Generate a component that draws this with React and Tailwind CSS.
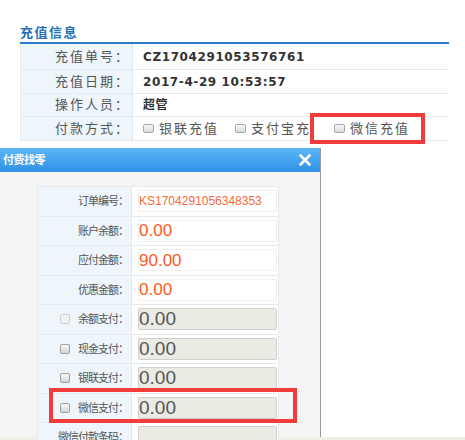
import React from 'react';

function Box({ light }) {
  return (
    <span
      className={`inline-block w-[11px] h-[9px] rounded-[2px] border ${light ? 'border-[#c8c8c8] bg-[#f0f0f0]' : 'border-[#a8a8a8] bg-gradient-to-b from-[#fafafa] to-[#d8d8d8]'}`}
    />
  );
}

function Check({ light }) {
  return (
    <span
      className={`inline-block w-[10px] h-[10px] rounded-[2px] border ${light ? 'border-[#cfcfcf] bg-[#f2f2f2]' : 'border-[#a0a0a0] bg-gradient-to-b from-[#fafafa] to-[#d5d5d5]'}`}
    />
  );
}

const topRows = [
  { label: '充值单号：', value: 'CZ1704291053576761', h: 'h-[26px]' },
  { label: '充值日期：', value: '2017-4-29 10:53:57', h: 'h-[24px]' },
  { label: '操作人员：', value: '超管', h: 'h-[23px]' },
];

const payRows = [
  { label: '余额支付：', light: true },
  { label: '现金支付：' },
  { label: '银联支付：' },
  { label: '微信支付：' },
];

function TopRow({ label, h, children }) {
  return (
    <div className={`flex ${h} border-b border-[#e6e9ee]`}>
      <div className="w-[112px] shrink-0 bg-[#eef5fb] border-r border-[#dfe6ee] flex items-center justify-end pr-[2px] text-[13px] tracking-[2px] text-[#555]">
        {label}
      </div>
      <div className="flex-1 flex items-center pl-[10px]">{children}</div>
    </div>
  );
}

function ModalRow({ label, children, check, light }) {
  return (
    <div className="flex h-[29.5px] border-b border-[#e6e9ee]">
      <div className="w-[94px] shrink-0 bg-[#eef5fb] border-r border-[#e3e8ee] flex items-center justify-end pr-[3px] text-[11px] tracking-[-1px] text-[#555] gap-[8px]">
        {check && <Check light={light} />}
        <span>{label}</span>
      </div>
      <div className="flex-1 flex items-center pl-[6px] pr-[1px] bg-white">{children}</div>
    </div>
  );
}

export default function App() {
  return (
    <div className="relative w-[465px] h-[440px] overflow-hidden bg-white flex flex-col font-['Liberation_Sans','Noto_Sans_CJK_SC',sans-serif]">
      <section className="pt-[24px] pl-[20px] w-[449px]">
        <div className="h-[20px] flex items-center border-b-2 border-[#2a7cc4] text-[13px] font-bold tracking-[1.5px] text-[#2470b8]">
          充值信息
        </div>
        <div className="border-l border-[#e6e9ee]">
          {topRows.map((r) => (
            <TopRow key={r.label} label={r.label} h={r.h}>
              <span className="font-['DejaVu_Sans','Noto_Sans_CJK_SC',sans-serif] font-bold text-[12px] tracking-[0.6px] text-[#333]">
                {r.value}
              </span>
            </TopRow>
          ))}
          <TopRow label="付款方式：" h="h-[24px]">
            <div className="flex items-center text-[13px] tracking-[2px] text-[#555]">
              <Box />
              <span className="ml-[5px]">银联充值</span>
              <span className="ml-[16px]"><Box /></span>
              <span className="ml-[5px]">支付宝充值</span>
            </div>
          </TopRow>
        </div>
      </section>

      <div className="flex-1" />
      <div className="h-[3px] bg-[#efeee4]" />

      {/* highlight on 微信充值 */}
      <div className="absolute left-[310px] top-[113px] w-[115px] h-[31px] border-4 border-[#f23b3b] bg-white flex items-center pl-[20px] text-[13px] tracking-[2px] text-[#555]">
        <Box />
        <span className="ml-[5px]">微信充值</span>
      </div>

      {/* dialog */}
      <div className="absolute left-0 top-[148px] w-[321px] h-[289px] bg-[#f5f5f5] border-r border-[#999] flex flex-col">
        <div className="h-[24px] shrink-0 bg-gradient-to-b from-[#5cb6f6] to-[#2e91e6] flex items-center justify-between pl-[3px] pr-[9px]">
          <span className="text-white font-bold text-[11px] tracking-[-0.5px]">付费找零</span>
          <svg width="12" height="12" viewBox="0 0 12 12">
            <path d="M1.5 1.5 L10.5 10.5 M10.5 1.5 L1.5 10.5" stroke="#fff" strokeWidth="2.6" strokeLinecap="round" />
          </svg>
        </div>
        <div className="pt-[14px] pl-[37px]">
          <div className="w-[242px] border-l border-r border-t border-[#e6e9ee]">
            <ModalRow label="订单编号：">
              <div className="w-full h-[22px] border border-[#f0f0f0] flex items-center text-[12px] text-[#f26b3a]">
                KS1704291056348353
              </div>
            </ModalRow>
            <ModalRow label="账户余额：">
              <div className="w-full h-[22px] border border-[#f0f0f0] flex items-center text-[17px] text-[#ff5a1f]">0.00</div>
            </ModalRow>
            <ModalRow label="应付金额：">
              <div className="w-full h-[22px] border border-[#f0f0f0] flex items-center text-[17px] text-[#ff5a1f]">90.00</div>
            </ModalRow>
            <ModalRow label="优惠金额：">
              <div className="w-full h-[22px] border border-[#f0f0f0] flex items-center text-[17px] text-[#ff5a1f]">0.00</div>
            </ModalRow>
            {payRows.map((r) => (
              <ModalRow key={r.label} label={r.label} check light={r.light}>
                <div className="w-full h-[22px] rounded-[2px] border border-[#cfcfcf] bg-[#ebebe4] flex items-center text-[19px] text-[#555]">
                  0.00
                </div>
              </ModalRow>
            ))}
            <ModalRow label="微信付款条码：">
              <div className="w-full h-[22px] rounded-[2px] border border-[#cfcfcf] bg-[#ebebe4]" />
            </ModalRow>
          </div>
        </div>
      </div>

      {/* highlight on 微信支付 */}
      <div className="absolute left-[49px] top-[388px] w-[248px] h-[35px] border-4 border-[#f23b3b]" />
    </div>
  );
}
